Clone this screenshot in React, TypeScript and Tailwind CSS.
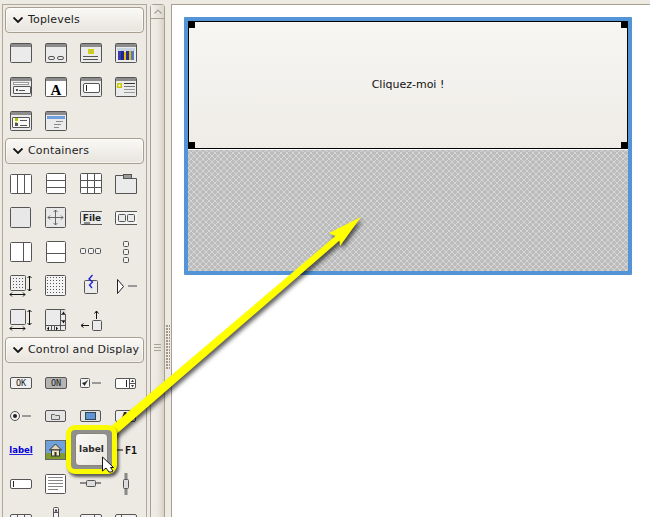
import React from "react";

const S = "#555";
const F = "#ebebeb";

function Win({ fill = F, children }: { fill?: string; children?: React.ReactNode }) {
  return (
    <>
      <rect x="6.5" y="7.5" width="21" height="19" rx="1" fill={fill} stroke={S} />
      <rect x="7" y="8" width="20" height="3" fill="#8c8c8c" />
      {children}
    </>
  );
}
const L = ({ x1, y1, x2, y2, c = S, w = 1 }: { x1: number; y1: number; x2: number; y2: number; c?: string; w?: number }) => (
  <line x1={x1} y1={y1} x2={x2} y2={y2} stroke={c} strokeWidth={w} />
);
const B = ({ x, y, w, h, f = F, s = S, r = 1 }: { x: number; y: number; w: number; h: number; f?: string; s?: string; r?: number }) => (
  <rect x={x + 0.5} y={y + 0.5} width={w - 1} height={h - 1} rx={r} fill={f} stroke={s} />
);
const Btn = ({ f = "#f0f0f0", children }: { f?: string; children?: React.ReactNode }) => (
  <>
    <B x={6} y={7} w={22} h={12} f={f} r={1.5} />
    {children}
  </>
);
const T = ({ x, y, size, children, fill = "#222", family = "DejaVu Sans Mono", weight = 400 }: { x: number; y: number; size: number; children: React.ReactNode; fill?: string; family?: string; weight?: number }) => (
  <text x={x} y={y} fontSize={size} fill={fill} fontFamily={family} fontWeight={weight} textAnchor="middle">
    {children}
  </text>
);
const Arr = ({ d }: { d: string }) => <path d={d} fill="none" stroke="#111" />;

const top: React.ReactNode[] = [
  <Win />,
  <Win>
    <B x={9} y={20} w={7} h={4} f="none" r={1.5} />
    <B x={18} y={20} w={7} h={4} f="none" r={1.5} />
  </Win>,
  <Win>
    <rect x="14" y="13" width="6" height="5" fill="#d4d400" />
    <rect x="15.5" y="14.5" width="3" height="2" fill="#c9b37a" />
    <L x1={9} y1={20.5} x2={24} y2={20.5} />
    <L x1={9} y1={23.5} x2={24} y2={23.5} />
  </Win>,
  <Win>
    <rect x="9" y="15" width="3" height="9" fill="#3b3bb0" />
    <rect x="12" y="14" width="3" height="10" fill="#24248c" />
    <rect x="15" y="16" width="2" height="8" fill="#e0c800" />
    <rect x="17" y="14" width="3" height="10" fill="#2a2a9c" />
    <rect x="20" y="15" width="2" height="9" fill="#d8c000" />
    <rect x="22" y="15" width="3" height="9" fill="#5a78c8" />
    <rect x="8" y="12" width="18" height="3" fill="#c8d4e0" />
  </Win>,
  <Win>
    <B x={9} y={12} w={16} h={3} f="#fff" s="#999" r={0} />
    <B x={9} y={16} w={18} h={8} f="#f4f4f4" r={0.5} />
    <rect x="12" y="19" width="2" height="2" fill={S} />
    <L x1={15} y1={20.5} x2={21} y2={20.5} />
  </Win>,
  <Win fill="#fff">
    <T x={17} y={25} size={15} family="Liberation Serif" weight={700} fill="#000">A</T>
  </Win>,
  <Win>
    <B x={9} y={13} w={17} h={10} f="#fff" r={1.5} />
    <L x1={12.5} y1={15} x2={12.5} y2={21} c="#222" />
  </Win>,
  <Win>
    <rect x="8" y="13" width="5" height="5" fill="#c8c800" />
    <rect x="9.5" y="14.5" width="2" height="2" fill="#fff" />
    <L x1={15} y1={13.5} x2={26} y2={13.5} c="#333" />
    <L x1={15} y1={16.5} x2={26} y2={16.5} c="#777" />
    <L x1={15} y1={19.5} x2={26} y2={19.5} c="#999" />
    <L x1={15} y1={22.5} x2={26} y2={22.5} c="#999" />
  </Win>,
  <Win>
    <B x={8} y={13} w={18} h={11} f="#fafafa" r={0.5} />
    <rect x="11" y="14" width="3" height="3" fill="#a8c800" />
    <rect x="11" y="19" width="3" height="3" fill="#555" />
    <rect x="11" y="18" width="2" height="1" fill="#a8c800" />
    <L x1={16} y1={16.5} x2={23} y2={16.5} />
    <L x1={16} y1={21.5} x2={23} y2={21.5} />
  </Win>,
  <Win>
    <rect x="8" y="12" width="18" height="3" fill="#6f9fdc" />
    <L x1={17} y1={17.5} x2={24} y2={17.5} c="#888" />
    <L x1={15} y1={20.5} x2={22} y2={20.5} c="#888" />
    <L x1={15} y1={23.5} x2={20} y2={23.5} c="#888" />
  </Win>,
];

const arrows4 = "M25.5 7V22M23.5 9L25.5 7L27.5 9M23.5 20L25.5 22L27.5 20M6 25.5H21M8 23.5L6 25.5L8 27.5M19 23.5L21 25.5L19 27.5";

const cont: React.ReactNode[] = [
  <>
    <B x={6} y={7} w={22} h={20} f="#fff" />
    <L x1={13.5} y1={7} x2={13.5} y2={27} />
    <L x1={20.5} y1={7} x2={20.5} y2={27} />
  </>,
  <>
    <B x={7} y={6} w={20} h={21} f="#fff" />
    <L x1={7} y1={13.5} x2={27} y2={13.5} />
    <L x1={7} y1={20.5} x2={27} y2={20.5} />
  </>,
  <>
    <B x={6} y={6} w={22} h={21} f="#fff" />
    <L x1={13.5} y1={6} x2={13.5} y2={27} />
    <L x1={20.5} y1={6} x2={20.5} y2={27} />
    <L x1={6} y1={13.5} x2={28} y2={13.5} />
    <L x1={6} y1={20.5} x2={28} y2={20.5} />
  </>,
  <>
    <path d="M6.5 8.5H14.5V11.5H27.5V26.5H6.5Z" fill={F} stroke={S} strokeLinejoin="round" />
    <rect x="14.5" y="7.5" width="8" height="4" fill="#9a9a9a" stroke={S} />
  </>,
  <B x={6} y={6} w={21} h={21} f="#e8e8e8" />,
  <>
    <B x={6} y={6} w={21} h={21} f="#e8e8e8" />
    <path d="M9 16.5H24M16.5 9V24M14.5 11L16.5 9L18.5 11M14.5 22L16.5 24L18.5 22M11 14.5L9 16.5L11 18.5M22 14.5L24 16.5L22 18.5" fill="none" stroke="#666" />
  </>,
  <>
    <path d="M28 10.5H7.5Q6.5 10.5 6.5 11.5V22.5Q6.5 23.5 7.5 23.5H28" fill={F} stroke={S} />
    <T x={18} y={20} size={9} family="DejaVu Sans" weight={700}>
      File
    </T>
    <L x1={10} y1={22} x2={16} y2={22} c="#222" />
  </>,
  <>
    <path d="M28 10.5H7.5Q6.5 10.5 6.5 11.5V22.5Q6.5 23.5 7.5 23.5H28" fill="#f4f4f4" stroke={S} />
    <B x={9} y={13} w={8} h={8} f={F} />
    <B x={18} y={13} w={8} h={8} f={F} />
  </>,
  <>
    <B x={6} y={7} w={22} h={20} f="#fff" />
    <L x1={19.5} y1={7} x2={19.5} y2={27} />
  </>,
  <>
    <B x={7} y={6} w={20} h={22} f="#fff" />
    <L x1={7} y1={18.5} x2={27} y2={18.5} />
  </>,
  <>
    <B x={6} y={13} w={6} h={6} f="#f2f2f2" />
    <B x={14} y={13} w={6} h={6} f="#f2f2f2" />
    <B x={21} y={13} w={6} h={6} f="#f2f2f2" />
  </>,
  <>
    <B x={14} y={6} w={6} h={6} f="#f2f2f2" />
    <B x={14} y={14} w={6} h={6} f="#f2f2f2" />
    <B x={14} y={22} w={6} h={6} f="#f2f2f2" />
  </>,
  <>
    <B x={6} y={6} w={16} h={16} f="#f0f0f0" />
    <g fill="#555">
      {[9, 12, 15, 18].flatMap((x) =>
        [9, 12, 15, 18].map((y) => <rect key={`${x}-${y}`} x={x} y={y} width="1" height="1" />),
      )}
    </g>
    <Arr d={arrows4} />
  </>,
  <>
    <B x={6} y={6} w={21} h={21} f="#f4f4f4" />
    <g fill="#555">
      {[9, 12, 15, 18, 21, 24].flatMap((x) =>
        [9, 12, 15, 18, 21, 24].map((y) => <rect key={`${x}-${y}`} x={x - 1} y={y - 1} width="1" height="1" />),
      )}
    </g>
  </>,
  <>
    <B x={10} y={11} w={14} h={14} f={F} />
    <path d="M18.5 6L15 10L18.5 13L15.5 16L18 19" fill="none" stroke="#1a1ad8" strokeWidth="1.3" />
  </>,
  <>
    <path d="M8.5 10.5V24.5L14.5 17.5Z" fill="#fff" stroke="#222" />
    <L x1={19} y1={17} x2={28} y2={17} c="#999" w={2} />
  </>,
  <>
    <B x={6} y={6} w={16} h={16} f={F} />
    <Arr d={arrows4} />
  </>,
  <>
    <B x={6} y={6} w={21} h={22} f={F} />
    <L x1={21.5} y1={6} x2={21.5} y2={28} />
    <L x1={6} y1={22.5} x2={27} y2={22.5} />
    <rect x="22" y="7" width="5" height="4" fill="#ddd" />
    <path d="M23 11L24.5 8.5L26 11ZM23 18L24.5 20.5L26 18ZM10 23.5L8 25.5L10 27.5ZM17 23.5L19 25.5L17 27.5Z" fill="#111" />
    <L x1={22} y1={11.5} x2={27} y2={11.5} />
    <L x1={22} y1={17.5} x2={27} y2={17.5} />
    <L x1={12.5} y1={23} x2={12.5} y2={28} />
    <L x1={15.5} y1={23} x2={15.5} y2={28} />
  </>,
  <>
    <B x={18} y={17} w={10} h={11} f={F} />
    <path d="M22.5 16V8M20.5 10.5L22.5 8L24.5 10.5M15 22.5H7M9.5 20.5L7 22.5L9.5 24.5" fill="none" stroke="#111" />
  </>,
];

const ctrl: React.ReactNode[] = [
  <g transform="translate(0 4)">
    <Btn>
      <T x={17} y={16} size={8.5}>OK</T>
    </Btn>
  </g>,
  <g transform="translate(0 4)">
    <Btn f="#b4b4b4">
      <T x={17} y={16} size={8.5}>ON</T>
    </Btn>
  </g>,
  <g transform="translate(0 4)">
    <B x={6} y={8} w={10} h={10} f="#f4f4f4" />
    <path d="M8.5 13L10.5 15.5L13.5 10.5L11 12.5Z" fill="#222" stroke="#222" strokeWidth="0.6" />
    <L x1={18} y1={13} x2={27} y2={13} c="#999" w={2} />
  </g>,
  <g transform="translate(0 4)">
    <B x={6} y={8} w={21} h={11} f="#fff" r={1.5} />
    <L x1={17.5} y1={10} x2={17.5} y2={17} c="#222" />
    <L x1={20.5} y1={8} x2={20.5} y2={19} />
    <L x1={20.5} y1={13.5} x2={27} y2={13.5} />
    <path d="M22 12L23.5 9.5L25 12ZM22 15L23.5 17.5L25 15Z" fill="#444" />
  </g>,
  <>
    <circle cx="11" cy="16" r="4.5" fill="#f0f0f0" stroke={S} />
    <circle cx="11" cy="16" r="2" fill="#222" />
    <L x1={18} y1={16} x2={27} y2={16} c="#999" w={2} />
  </>,
  <>
    <B x={6} y={10} w={21} h={12} f="#e4e4e4" r={1.5} />
    <path d="M12.5 14.5H15.5L16.5 15.5H20.5V19.5H12.5Z" fill="#ddd" stroke="#666" />
  </>,
  <>
    <B x={6} y={10} w={21} h={12} f="#e4e4e4" r={1.5} />
    <rect x="11.5" y="12.5" width="10" height="7" fill="#5c94d4" stroke="#345" />
  </>,
  <>
    <B x={6} y={10} w={21} h={12} f="#f0f0f0" r={1.5} />
    <T x={16} y={20} size={10} family="DejaVu Sans" weight={700}>A</T>
  </>,
  <T x={17} y={19} size={8.5} family="DejaVu Sans" weight={700} fill="#0000d8">
    <tspan textDecoration="underline">label</tspan>
  </T>,
  <>
    <rect x="6" y="6" width="21" height="13" fill="#6fa2dc" />
    <rect x="6" y="19" width="21" height="7" fill="#7f9a2e" />
    <rect x="6.5" y="6.5" width="20" height="19" fill="none" stroke="#666" />
    <path d="M16.5 10L22.5 16H10.5Z" fill="#ddd6b8" stroke="#333" />
    <rect x="12.5" y="16" width="8" height="6" fill="#eee6c4" stroke="#333" />
    <rect x="15.5" y="18" width="2" height="4" fill="#333" />
  </>,
  <></>,
  <>
    <L x1={6} y1={16} x2={14} y2={16} c="#777" w={2} />
    <T x={22} y={20} size={10} weight={700} fill="#111">F1</T>
  </>,
  <>
    <B x={6} y={11} w={22} h={10} f="#fff" r={1.5} />
    <L x1={9.5} y1={13} x2={9.5} y2={19} c="#222" />
  </>,
  <>
    <B x={6} y={6} w={21} h={20} f="#fff" r={1} />
    <g stroke="#888">
      {[9.5, 12.5, 15.5, 18.5, 21.5].map((y, i) => (
        <line key={y} x1={9} x2={i === 4 ? 19 : 24} y1={y} y2={y} />
      ))}
    </g>
  </>,
  <>
    <L x1={6} y1={15} x2={27} y2={15} c="#888" w={2} />
    <B x={12} y={12} w={10} h={7} f="#ddd" r={1} />
  </>,
  <>
    <L x1={17} y1={5} x2={17} y2={27} c="#888" w={3} />
    <B x={14} y={11} w={6} h={10} f="#ddd" r={1} />
  </>,
  <>
    <B x={6} y={12} w={22} h={12} f="#f4f4f4" r={1.5} />
    <L x1={13.5} y1={12} x2={13.5} y2={24} />
    <L x1={20.5} y1={12} x2={20.5} y2={24} />
  </>,
  <>
    <B x={14} y={5} w={6} h={14} f="#f4f4f4" r={1} />
    <path d="M15.5 9.5L17 7L18.5 9.5Z" fill="#222" />
    <L x1={14} y1={10.5} x2={20} y2={10.5} />
  </>,
  <>
    <B x={6} y={12} w={22} h={12} f="#f4f4f4" r={1.5} />
    <L x1={20.5} y1={12} x2={20.5} y2={24} />
  </>,
  <>
    <B x={6} y={12} w={22} h={12} f="#f4f4f4" r={1.5} />
    <L x1={12.5} y1={12} x2={12.5} y2={24} />
  </>,
];

function Grid({ items }: { items: React.ReactNode[] }) {
  return (
    <div className="grid grid-cols-[repeat(4,35px)] auto-rows-[34px] pl-[1px] pt-[3px]">
      {items.map((it, i) => (
        <svg key={i} viewBox="0 0 35 34" width="35" height="34" className="block">
          {it}
        </svg>
      ))}
    </div>
  );
}

function Header({ title }: { title: string }) {
  return (
    <div className="mx-[2px] h-[26px] flex items-center gap-[5px] pl-[7px] rounded-[4px] border border-[#a79f8f] bg-gradient-to-b from-[#faf9f6] to-[#e8e4dd] shadow-[inset_0_0_0_1px_rgba(255,255,255,0.5)] text-[11px] tracking-[0.17px] text-[#222] font-['DejaVu_Sans',sans-serif] whitespace-nowrap">
      <svg width="10" height="6" viewBox="0 0 10 6" className="shrink-0">
        <path d="M0.5 0.5L5 5L9.5 0.5" fill="none" stroke="#111" strokeWidth="1.8" />
      </svg>
      <span>{title}</span>
    </div>
  );
}

export default function App() {
  return (
    <div className="relative w-[650px] h-[517px] overflow-hidden flex bg-[#ede9e3] font-['DejaVu_Sans',sans-serif]">
      <div className="w-[145px] mt-[4px] ml-[2px] shrink-0 border-l border-t border-r border-[#b0a898] pt-[2px] overflow-hidden">
        <Header title="Toplevels" />
        <Grid items={top} />
        <Header title="Containers" />
        <Grid items={cont} />
        <Header title="Control and Display" />
        <Grid items={ctrl} />
      </div>

      <div className="ml-[3px] mt-[4px] w-[15px] shrink-0 flex flex-col border-x border-t border-[#a79f8f] rounded-t-[4px] bg-[#d8d2c8]">
        <div className="h-[14px] shrink-0 flex items-center justify-center border-b border-[#a79f8f] bg-gradient-to-r from-[#f4f2ee] to-[#dcd7cd]">
          <svg width="8" height="5" viewBox="0 0 8 5">
            <path d="M0.5 4.5L4 1L7.5 4.5" fill="none" stroke="#a8a294" strokeWidth="1.2" />
          </svg>
        </div>
        <div className="flex-1 bg-gradient-to-r from-[#f0ede8] via-[#ece8e1] to-[#d9d3c9] flex justify-center pt-[325px]">
          <div className="flex flex-col gap-[2px]">
            <div className="w-[7px] h-px bg-[#a8a294]" />
            <div className="w-[7px] h-px bg-[#a8a294]" />
            <div className="w-[7px] h-px bg-[#a8a294]" />
          </div>
        </div>
      </div>

      <div className="w-[6px] shrink-0 flex justify-center pt-[325px]">
        <div className="w-[4px] h-[45px] bg-[radial-gradient(circle_at_1px_1px,#a09888_1px,transparent_1px)] bg-[length:3px_3px]" />
      </div>

      <div className="flex-1 mt-[4px] border-l border-t border-[#a79f8f] bg-white pl-[12px] pt-[12px]">
        <div className="w-[448px] h-[258px] border-[4px] border-[#5294d6] bg-[#bbbbbb] rounded-[1px] flex flex-col">
          <div className="relative h-[128px] shrink-0 border border-black bg-gradient-to-b from-[#f7f6f3] to-[#efece7] flex items-center justify-center text-[11px] text-[#111] font-['DejaVu_Sans',sans-serif]">
            Cliquez-moi !
            <div className="absolute left-[-1px] top-[-1px] w-[7px] h-[7px] bg-black" />
            <div className="absolute right-[-1px] top-[-1px] w-[7px] h-[7px] bg-black" />
            <div className="absolute left-[-1px] bottom-[-1px] w-[7px] h-[7px] bg-black" />
            <div className="absolute right-[-1px] bottom-[-1px] w-[7px] h-[7px] bg-black" />
          </div>
          <div className="flex-1 border-t border-white bg-[#bcbcbc] bg-[linear-gradient(45deg,transparent_42%,#d6d6d6_42%,#d6d6d6_58%,transparent_58%),linear-gradient(-45deg,transparent_42%,#d6d6d6_42%,#d6d6d6_58%,transparent_58%)] bg-[length:6px_6px]" />
        </div>
      </div>

      <svg width="650" height="517" viewBox="0 0 650 517" className="absolute left-0 top-0 pointer-events-none drop-shadow-[2px_3px_2px_rgba(0,0,0,0.65)]">
        <path d="M361 217L329 233L335.5 236L108 429L113 437L339.5 240.5L340 246Z" fill="#ffff00" />
      </svg>

      <div className="absolute left-[66px] top-[425px] w-[51px] h-[49px] rounded-[9px] border-[5px] border-[#fbfb00] bg-[#8f8f8f] shadow-[2px_3px_3px_rgba(0,0,0,0.6)] flex items-center justify-center">
        <div className="w-[33px] h-[33px] rounded-[4px] border border-[#8a8478] bg-gradient-to-br from-[#fbfaf8] to-[#e8e4dc] flex items-center justify-center text-[9px] font-bold text-[#2a2a2a] font-['DejaVu_Sans',sans-serif]">
          label
        </div>
      </div>
      <svg width="14" height="18" viewBox="0 0 14 18" className="absolute left-[101px] top-[456px]">
        <path d="M1.5 1V15L5 12L8 16H10L12 15L9.5 11.5H12.5Z" fill="#fff" stroke="#111" />
      </svg>
    </div>
  );
}
